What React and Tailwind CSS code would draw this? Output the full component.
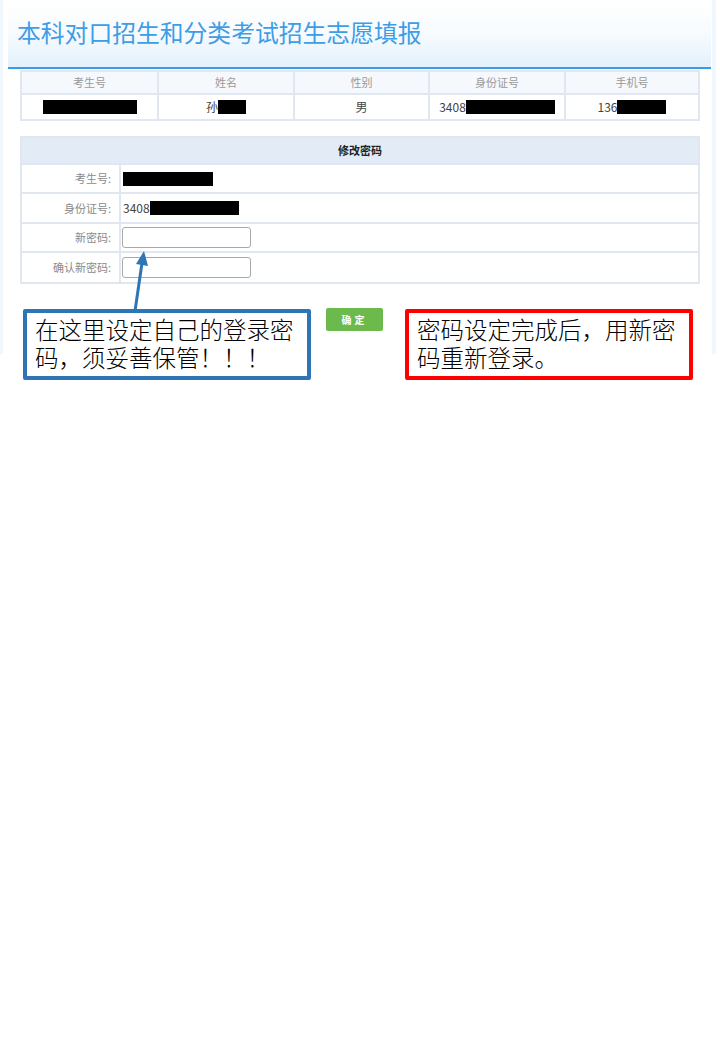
import React from "react";

const B = "border-[#e0e7f0]";

function Redact({ w, h = 14 }) {
  return <span className="inline-block bg-black" style={{ width: w, height: h }} />;
}

export default function App() {
  const rows = [
    ["考生号:", <Redact key="a" w={90} />, "h-[29px]"],
    ["身份证号:", <span key="b" className="flex items-center text-[12px] text-[#444]"><span>3408</span><Redact w={89} /></span>, "h-[30px]"],
    ["新密码:", <span key="c" className="block -ml-px w-[129px] h-[21px] border-[1.5px] border-[#a9a9a9] rounded-[3px] bg-white" />, "h-[29px]"],
    ["确认新密码:", <span key="d" className="block -ml-px w-[129px] h-[21px] border-[1.5px] border-[#a9a9a9] rounded-[3px] bg-white" />, "h-[29px]"],
  ];
  return (
    <div className="relative w-[720px] h-[1040px] bg-white font-['Noto_Sans_CJK_SC','Noto_Sans',sans-serif]">
      <div className="w-[716px] h-[354px] border-l-[3px] border-r-[4px] border-[#f1f8fd]">
        {/* header */}
        <div className="ml-[5px] w-[703px] h-[69px] bg-gradient-to-b from-white via-[#f7fbfe] to-[#e2f1fc] border-b-2 border-[#3a9de3]">
          <div className="pl-[9px] pt-[15px] text-[23.8px] leading-[33px] text-[#3d9de6] whitespace-nowrap">
            本科对口招生和分类考试招生志愿填报
          </div>
        </div>

        {/* info table */}
        <div className={`ml-[17px] mt-px w-[680px] border-2 ${B}`}>
          <div className={`grid grid-cols-[137px_136px_135px_136px_1fr] h-[23px] bg-[#f5f8fc] border-b-2 ${B} text-[11px] text-[#9a9a9a]`}>
            {["考生号", "姓名", "性别", "身份证号", "手机号"].map((t, i) => (
              <div key={t} className={`flex items-center justify-center ${i < 4 ? `border-r-2 ${B}` : ""}`}>{t}</div>
            ))}
          </div>
          <div className="grid grid-cols-[137px_136px_135px_136px_1fr] h-[24px] text-[12px] text-[#444]">
            <div className={`flex items-center justify-center border-r-2 ${B}`}><Redact w={94} /></div>
            <div className={`flex items-center justify-center border-r-2 ${B}`}><span>孙</span><Redact w={28} /></div>
            <div className={`flex items-center justify-center border-r-2 ${B}`}>男</div>
            <div className={`flex items-center justify-center border-r-2 ${B}`}><span>3408</span><Redact w={89} /></div>
            <div className="flex items-center justify-center"><span>136</span><Redact w={49} /></div>
          </div>
        </div>

        {/* password table */}
        <div className={`ml-[17px] mt-[15px] w-[680px] border-2 ${B}`}>
          <div className={`h-[27px] bg-[#e3ecf6] border-b-2 ${B} flex items-center justify-center text-[11px] font-bold text-[#222]`}>
            修改密码
          </div>
          {rows.map(([label, val, h], i) => (
            <div key={label} className={`flex ${h} ${i < 3 ? `border-b-2 ${B}` : ""}`}>
              <div className={`w-[99px] shrink-0 border-r-2 ${B} flex items-center justify-end pr-[8px] text-[11px] text-[#8a8a8a]`}>
                {label}
              </div>
              <div className="flex items-center pl-[2px]">{val}</div>
            </div>
          ))}
        </div>

        {/* bottom row */}
        <div className="flex items-start mt-[24px]">
          <div className="ml-[20px] mt-px w-[288px] h-[71px] border-[4px] border-[#2e75b6] rounded-[2px] pl-[8px] pt-[2px] text-[23.5px] leading-[28px] font-light text-black whitespace-nowrap">
            在这里设定自己的登录密
            <br />
            码，须妥善保管！！！
          </div>
          <div className="ml-[15px] w-[57px] h-[23px] bg-[#6cba4c] rounded-[2px] flex items-center justify-center text-[10px] font-bold text-white tracking-[3px]">
            确定
          </div>
          <div className="ml-[22px] mt-px w-[288px] h-[71px] border-[4px] border-[#ff0000] rounded-[2px] pl-[8px] pt-[2px] text-[23.5px] leading-[28px] font-light text-black whitespace-nowrap">
            密码设定完成后，用新密
            <br />
            码重新登录。
          </div>
        </div>
      </div>

      {/* annotation arrow */}
      <svg className="absolute left-0 top-0 pointer-events-none" width="720" height="400" viewBox="0 0 720 400">
        <line x1="135" y1="311" x2="142" y2="263" stroke="#2e75b6" strokeWidth="3" />
        <polygon points="144,251 148,266 136,264" fill="#2e75b6" />
      </svg>
    </div>
  );
}
